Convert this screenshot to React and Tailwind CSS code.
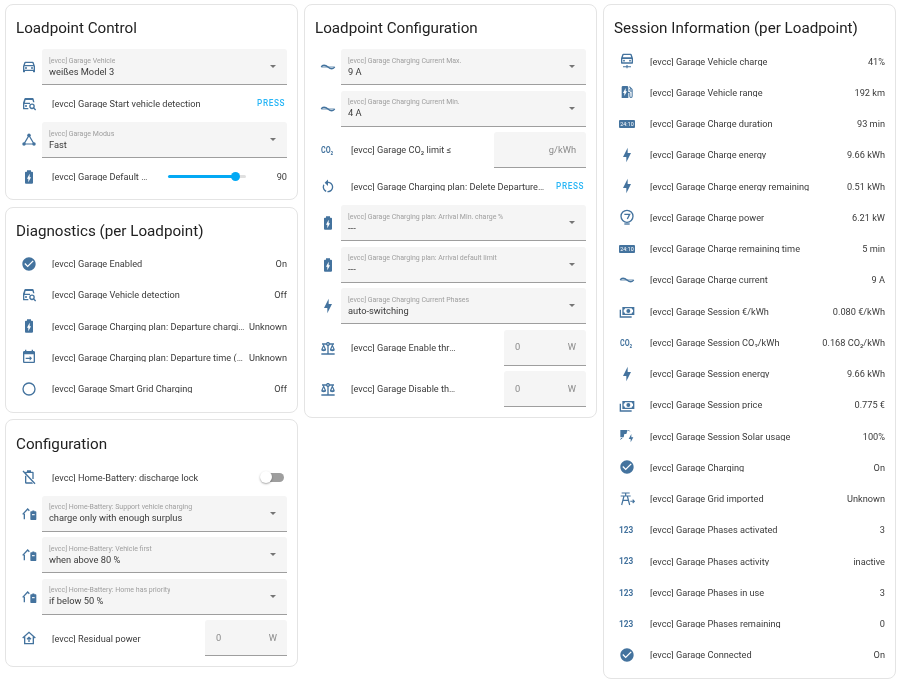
import React from "react";

// Material icon paths
const paths = {
  car: "M18.92 5.01C18.72 4.42 18.16 4 17.5 4h-11c-.66 0-1.21.42-1.42 1.01L3 11v8c0 .55.45 1 1 1h1c.55 0 1-.45 1-1v-1h12v1c0 .55.45 1 1 1h1c.55 0 1-.45 1-1v-8l-2.08-5.99zM6.85 6h10.29l1.08 3.11H5.77L6.85 6zM19 16H5v-5h14v5zM7.5 12a1.5 1.5 0 1 0 0 3 1.5 1.5 0 0 0 0-3zM16.5 12a1.5 1.5 0 1 0 0 3 1.5 1.5 0 0 0 0-3z",
  check: "M12 2C6.5 2 2 6.5 2 12S6.5 22 12 22 22 17.5 22 12 17.5 2 12 2M10 17L5 12L6.41 10.59L10 14.17L17.59 6.58L19 8L10 17Z",
  circle: "M12,20A8,8 0 0,1 4,12A8,8 0 0,1 12,4A8,8 0 0,1 20,12A8,8 0 0,1 12,20M12,2A10,10 0 0,0 2,12A10,10 0 0,0 12,22A10,10 0 0,0 22,12A10,10 0 0,0 12,2Z",
  battery: "M16.67 4H15V2H9v2H7.33C6.6 4 6 4.6 6 5.33v15.33C6 21.4 6.6 22 7.33 22h9.33c.74 0 1.34-.6 1.34-1.33V5.33C18 4.6 17.4 4 16.67 4zM11 20v-5.5H9L13 7v5.5h2L11 20z",
  bolt: "M11 15H6L13 1V9H18L11 23V15Z",
  calendar: "M19 3h-1V1h-2v2H8V1H6v2H5c-1.1 0-2 .9-2 2v14c0 1.1.9 2 2 2h14c1.1 0 2-.9 2-2V5c0-1.1-.9-2-2-2zm0 16H5V8h14v11zM7 13h6v-2.5l3.5 3.5-3.5 3.5V15H7z",
  restart: "M12,4C14.1,4 16.1,4.8 17.6,6.3C20.7,9.4 20.7,14.5 17.6,17.6C15.8,19.5 13.3,20.2 10.9,19.9L11.4,17.9C13.1,18.1 14.9,17.5 16.2,16.2C18.5,13.9 18.5,10.1 16.2,7.7C15.1,6.6 13.5,6 12,6V10.6L7,5.6L12,0.6V4M6.3,17.6C3.7,15 3.3,11 5.1,7.9L6.6,9.4C5.5,11.6 5.9,14.4 7.8,16.2C8.3,16.7 8.9,17.1 9.6,17.4L9,19.4C8,19 7.1,18.4 6.3,17.6Z",
  scale: "M12,3C10.73,3 9.6,3.8 9.18,5H3V7H4.95L2,14C1.53,16 3,17 5.5,17C8,17 9.56,16 9,14L6.05,7H9.17C9.5,7.85 10.15,8.5 11,8.83V20H2V22H22V20H13V8.82C13.85,8.5 14.5,7.85 14.82,7H17.95L15,14C14.53,16 16,17 18.5,17C21,17 22.56,16 22,14L19.05,7H21V5H14.83C14.4,3.8 13.27,3 12,3M12,5A1,1 0 0,1 13,6A1,1 0 0,1 12,7A1,1 0 0,1 11,6A1,1 0 0,1 12,5M5.5,10.25L7,14H4L5.5,10.25M18.5,10.25L20,14H17L18.5,10.25Z",
  cash: "M5,6H23V18H5V6M14,9A3,3 0 0,1 17,12A3,3 0 0,1 14,15A3,3 0 0,1 11,12A3,3 0 0,1 14,9M9,8A2,2 0 0,1 7,10V14A2,2 0 0,1 9,16H19A2,2 0 0,1 21,14V10A2,2 0 0,1 19,8H9M1,10H3V20H19V22H1V10Z",
  ev: "M19.77,7.23L19.78,7.22L16.06,3.5L15,4.56L17.11,6.67C16.17,7 15.5,7.93 15.5,9A2.5,2.5 0 0,0 18,11.5C18.36,11.5 18.69,11.42 19,11.29V18.5A1,1 0 0,1 18,19.5A1,1 0 0,1 17,18.5V14C17,12.89 16.1,12 15,12H14V5A2,2 0 0,0 12,3H6A2,2 0 0,0 4,5V21H14V13.5H15.5V18.5A2.5,2.5 0 0,0 18,21A2.5,2.5 0 0,0 20.5,18.5V9C20.5,8.31 20.22,7.68 19.77,7.23M18,10A1,1 0 0,1 17,9A1,1 0 0,1 18,8A1,1 0 0,1 19,9A1,1 0 0,1 18,10M8,18V13.5H6L10,6V11H12L8,18Z",
};

const Icon = ({ name, size = 16 }) => (
  <svg viewBox="0 0 24 24" width={size} height={size} className="fill-[#44739e]">
    <path d={paths[name]} />
  </svg>
);

const Svg = ({ children, size = 16 }) => (
  <svg viewBox="0 0 24 24" width={size} height={size} className="fill-[#44739e] stroke-[#44739e]">
    {children}
  </svg>
);

// icons that have to be drawn by hand
const CarSearch = () => (
  <Svg>
    <path stroke="none" d="M17.5 3h-11c-.66 0-1.21.42-1.42 1L3 10v9c0 .55.45 1 1 1h7v-2H5v-6h8.5v-2H5.77l1.08-4h10.3l1 3.5h2L18.92 4c-.2-.58-.76-1-1.42-1z" />
    <circle cx="7.5" cy="15" r="1.5" stroke="none" />
    <circle cx="16.5" cy="15.5" r="3.2" fill="none" strokeWidth="2" />
    <path d="M19 18l3 3" fill="none" strokeWidth="2" />
  </Svg>
);

const Graph = () => (
  <Svg>
    <circle cx="12" cy="5" r="2.6" stroke="none" />
    <circle cx="4.5" cy="18" r="2.6" stroke="none" />
    <circle cx="19.5" cy="18" r="2.6" stroke="none" />
    <path d="M12 5L4.5 18H19.5Z" fill="none" strokeWidth="1.8" />
  </Svg>
);

const Wave = () => (
  <Svg>
    <path d="M2 12C3.5 8.5 8 8.5 12 12S20 15.5 22 12" fill="none" strokeWidth="2.2" />
    <path d="M2 12H22" fill="none" strokeWidth="1.2" />
  </Svg>
);

const BatteryOff = () => (
  <Svg>
    <path stroke="none" d="M9 2h6v2h2.7c.7 0 1.3.6 1.3 1.3V15h-2V6H8v2H6V5.3C6 4.6 6.6 4 7.3 4H9zM6 10h2v10h8.5l1.5 2H7.3C6.6 22 6 21.4 6 20.7z" />
    <path d="M3 3l18 19" fill="none" strokeWidth="2" />
  </Svg>
);

const HomeBattery = () => (
  <Svg>
    <path d="M2.5 12.5L10 4.5L12.5 7M5 11.5V20" fill="none" strokeWidth="2" />
    <path stroke="none" d="M15 8h2V6.8h3V8h2c.6 0 1 .4 1 1v11c0 .6-.4 1-1 1h-7c-.6 0-1-.4-1-1V9c0-.6.4-1 1-1z" />
    <path d="M16.5 13h4" stroke="#fff" strokeWidth="1.6" />
  </Svg>
);

const HomeUp = () => (
  <Svg>
    <path d="M2.5 12L12 3.5L21.5 12M5.5 10V20.5H18.5V10" fill="none" strokeWidth="2" />
    <path d="M12 18v-6M9 14l3-3 3 3" fill="none" strokeWidth="2" />
  </Svg>
);

const CarPlug = () => (
  <Svg>
    <path stroke="none" d="M17.5 1h-11c-.66 0-1.21.42-1.42 1L3 8v7c0 .55.45 1 1 1h16c.55 0 1-.45 1-1V8l-2.08-6c-.2-.58-.76-1-1.42-1zM6.85 3h10.29l1.08 3.5H5.77zM19 14H5V9h14z" />
    <circle cx="7.5" cy="11.5" r="1.4" stroke="none" />
    <circle cx="16.5" cy="11.5" r="1.4" stroke="none" />
    <path d="M6 20.5H18M12 18V23" fill="none" strokeWidth="1.6" />
  </Svg>
);

const Counter = () => (
  <svg viewBox="0 0 24 12" width={16} height={8}>
    <rect x="0" y="0" width="24" height="12" rx="1.5" className="fill-[#44739e]" />
    <text x="12" y="9" textAnchor="middle" fontSize="8" fontFamily="Roboto, sans-serif" fill="#ffffff">24:10</text>
  </svg>
);

const Gauge = () => (
  <Svg>
    <circle cx="12" cy="11" r="9" fill="none" strokeWidth="2" />
    <path d="M8 8H16L12.5 15" fill="none" strokeWidth="2" />
    <path d="M8 22.5H16" fill="none" strokeWidth="2" />
  </Svg>
);

const Solar = () => (
  <Svg>
    <path stroke="none" d="M2 3H13L11 9H8L7 14H2z" />
    <path d="M14 3l2 2M2 17l3-2" fill="none" strokeWidth="1.5" />
    <path stroke="none" d="M17.5 21.5v-5h-3l4-7.5v5h3z" />
  </Svg>
);

const Tower = () => (
  <Svg>
    <path d="M4 3H16M2.5 7.5H17.5M10 3V7.5M7.5 7.5L4 21M12.5 7.5L16 21M6 14H14" fill="none" strokeWidth="1.8" />
    <path d="M17 15.5H23M20.5 13l2.5 2.5-2.5 2.5" fill="none" strokeWidth="1.6" />
  </Svg>
);

const i = {
  car: <Icon name="car" />,
  carSearch: <CarSearch />,
  graph: <Graph />,
  battery: <Icon name="battery" />,
  check: <Icon name="check" />,
  calendar: <Icon name="calendar" />,
  circle: <Icon name="circle" />,
  batteryOff: <BatteryOff />,
  homeBattery: <HomeBattery />,
  homeUp: <HomeUp />,
  wave: <Wave />,
  co2: <span className="font-bold text-[9.5px] leading-none text-[#44739e] scale-x-75">CO₂</span>,
  restart: <Icon name="restart" />,
  bolt: <Icon name="bolt" />,
  scale: <Icon name="scale" />,
  carPlug: <CarPlug />,
  ev: <Icon name="ev" />,
  counter: <Counter />,
  gauge: <Gauge />,
  cash: <Icon name="cash" />,
  solar: <Solar />,
  tower: <Tower />,
  num: <span className="font-bold text-[9.5px] leading-none text-[#44739e] scale-x-[.875]">123</span>,
};

const IconCell = ({ icon }) => (
  <div className="w-[36px] shrink-0 flex items-center justify-center pr-[11px]">{icon}</div>
);

const Card = ({ title, tight, children }) => (
  <div className={`bg-white border border-[#e4e4e4] rounded-[8px] px-[10px] ${tight ? "pb-[7.5px]" : "pb-[9.5px]"}`}>
    <div className={`${tight ? "h-[40.5px] pt-[7px]" : "h-[44px] pt-[4px]"} flex items-center text-[15.2px] text-[#212121]`}>{title}</div>
    <div className={`flex flex-col ${tight ? "" : "gap-[5.5px]"}`}>{children}</div>
  </div>
);

const Row = ({ icon, label, labelPad = "", right }) => (
  <div className="flex items-center h-[26px]">
    <IconCell icon={icon} />
    <div className={`flex-1 min-w-0 truncate text-[#3a3a3a] ${labelPad}`}>{label}</div>
    {right}
  </div>
);

const StateRow = ({ icon, label, value }) => (
  <div className="flex items-center h-[31.25px]">
    <IconCell icon={icon} />
    <div className="flex-1 min-w-0 truncate text-[#3a3a3a]">{label}</div>
    <div className="shrink-0 pl-[4px] text-[#3a3a3a]">{value}</div>
  </div>
);

const Press = () => (
  <div className="shrink-0 pl-[10px] pr-[2px] text-[8.2px] font-medium tracking-[0.6px] text-[#29b6f6]">PRESS</div>
);

const Select = ({ icon, label, value }) => (
  <div className="flex items-center h-[36px]">
    <div className="w-[25.5px] shrink-0 flex items-center justify-center">{icon}</div>
    <div className="flex-1 h-full bg-[#f5f5f5] border-b border-[#9e9e9e] rounded-t-[3px] pl-[7.5px] pr-[11px] flex items-center justify-between">
      <div className="min-w-0 pt-px">
        <div className="text-[7px] leading-[9px] text-[#9e9e9e] truncate">{label}</div>
        <div className="text-[9.3px] leading-[12px] text-[#3a3a3a]">{value}</div>
      </div>
      <div className="w-0 h-0 border-x-[3.5px] border-x-transparent border-t-[3.5px] border-t-[#757575]" />
    </div>
  </div>
);

const NumberInput = ({ icon, label, value, unit, width, labelPad }) => (
  <div className="flex items-center h-[36px]">
    <IconCell icon={icon} />
    <div className={`flex-1 min-w-0 truncate text-[#3a3a3a] ${labelPad}`}>{label}</div>
    <div className={`${width} h-full shrink-0 bg-[#f5f5f5] border-b border-[#9e9e9e] rounded-t-[3px] flex items-center justify-between pl-[11px] pr-[10px] text-[9.3px] text-[#8a8a8a]`}>
      <span>{value}</span>
      <span>{unit}</span>
    </div>
  </div>
);

const Slider = () => (
  <div className="flex items-center shrink-0 w-[119px]">
    <div className="flex items-center w-[78px]">
      <div className="h-[2.5px] w-[67px] bg-[#03a9f4] rounded-l-full" />
      <div className="w-[9px] h-[9px] rounded-full bg-[#03a9f4] -mx-[4.5px] z-10" />
      <div className="h-[2.5px] flex-1 bg-[#e0e0e0] rounded-r-full" />
    </div>
    <div className="flex-1 text-right text-[#3a3a3a]">90</div>
  </div>
);

const Toggle = () => (
  <div className="relative w-[24px] h-[12px] shrink-0 mr-[3px]">
    <div className="absolute left-[4px] right-0 top-[1.5px] h-[9px] rounded-full bg-[#9e9e9e]" />
    <div className="absolute left-0 top-0 w-[12px] h-[12px] rounded-full bg-white shadow-[0_1px_2px_rgba(0,0,0,0.35)]" />
  </div>
);

const session = [
  ["carPlug", "Vehicle charge", "41%"],
  ["ev", "Vehicle range", "192 km"],
  ["counter", "Charge duration", "93 min"],
  ["bolt", "Charge energy", "9.66 kWh"],
  ["bolt", "Charge energy remaining", "0.51 kWh"],
  ["gauge", "Charge power", "6.21 kW"],
  ["counter", "Charge remaining time", "5 min"],
  ["wave", "Charge current", "9 A"],
  ["cash", "Session €/kWh", "0.080 €/kWh"],
  ["co2", "Session CO₂/kWh", "0.168 CO₂/kWh"],
  ["bolt", "Session energy", "9.66 kWh"],
  ["cash", "Session price", "0.775 €"],
  ["solar", "Session Solar usage", "100%"],
  ["check", "Charging", "On"],
  ["tower", "Grid imported", "Unknown"],
  ["num", "Phases activated", "3"],
  ["num", "Phases activity", "inactive"],
  ["num", "Phases in use", "3"],
  ["num", "Phases remaining", "0"],
  ["check", "Connected", "On"],
];

export default function App() {
  return (
    <div className="min-h-[683px] bg-white font-['Roboto',sans-serif] text-[9.2px] leading-none px-[5px] pt-[4px] grid grid-cols-[293px_293px_293px] gap-x-[6px] items-start blur-[0.3px]">
      {/* left column */}
      <div className="flex flex-col gap-[6.5px]">
        <Card title="Loadpoint Control">
          <Select icon={i.car} label="[evcc] Garage Vehicle" value="weißes Model 3" />
          <Row icon={i.carSearch} label="[evcc] Garage Start vehicle detection" right={<Press />} />
          <Select icon={i.graph} label="[evcc] Garage Modus" value="Fast" />
          <Row icon={i.battery} label="[evcc] Garage Default Limit" labelPad="pr-[20px]" right={<Slider />} />
        </Card>
        <Card title="Diagnostics (per Loadpoint)" tight>
          <StateRow icon={i.check} label="[evcc] Garage Enabled" value="On" />
          <StateRow icon={i.carSearch} label="[evcc] Garage Vehicle detection" value="Off" />
          <StateRow icon={i.battery} label="[evcc] Garage Charging plan: Departure charging limit" value="Unknown" />
          <StateRow icon={i.calendar} label="[evcc] Garage Charging plan: Departure time (active)" value="Unknown" />
          <StateRow icon={i.circle} label="[evcc] Garage Smart Grid Charging" value="Off" />
        </Card>
        <Card title="Configuration">
          <Row icon={i.batteryOff} label="[evcc] Home-Battery: discharge lock" right={<Toggle />} />
          <Select icon={i.homeBattery} label="[evcc] Home-Battery: Support vehicle charging" value="charge only with enough surplus" />
          <Select icon={i.homeBattery} label="[evcc] Home-Battery: Vehicle first" value="when above 80 %" />
          <Select icon={i.homeBattery} label="[evcc] Home-Battery: Home has priority" value="if below 50 %" />
          <NumberInput icon={i.homeUp} label="[evcc] Residual power" value="0" unit="W" width="w-[82px]" labelPad="pr-[48px]" />
        </Card>
      </div>

      {/* middle column */}
      <Card title="Loadpoint Configuration">
        <Select icon={i.wave} label="[evcc] Garage Charging Current Max." value="9 A" />
        <Select icon={i.wave} label="[evcc] Garage Charging Current Min." value="4 A" />
        <NumberInput icon={i.co2} label="[evcc] Garage CO₂ limit ≤" value="" unit="g/kWh" width="w-[92px]" labelPad="pr-[20px]" />
        <Row icon={i.restart} label="[evcc] Garage Charging plan: Delete Departure Time" right={<Press />} />
        <Select icon={i.battery} label="[evcc] Garage Charging plan: Arrival Min. charge %" value="---" />
        <Select icon={i.battery} label="[evcc] Garage Charging plan: Arrival default limit" value="---" />
        <Select icon={i.bolt} label="[evcc] Garage Charging Current Phases" value="auto-switching" />
        <NumberInput icon={i.scale} label="[evcc] Garage Enable threshold" value="0" unit="W" width="w-[82px]" labelPad="pr-[48px]" />
        <NumberInput icon={i.scale} label="[evcc] Garage Disable threshold" value="0" unit="W" width="w-[82px]" labelPad="pr-[48px]" />
      </Card>

      {/* right column */}
      <Card title="Session Information (per Loadpoint)" tight>
        {session.map(([icon, label, value]) => (
          <StateRow key={label} icon={i[icon]} label={`[evcc] Garage ${label}`} value={value} />
        ))}
      </Card>
    </div>
  );
}
